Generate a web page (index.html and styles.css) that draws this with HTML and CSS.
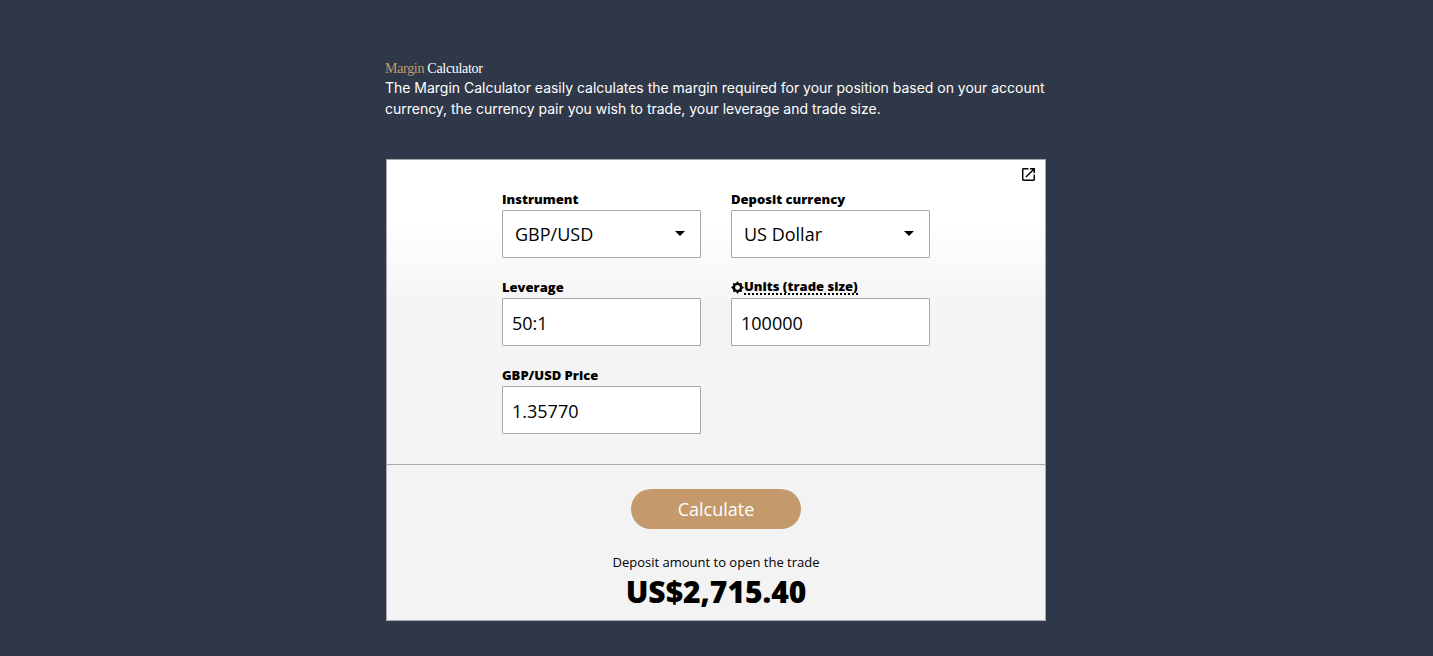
FILE: index.html
```html
<!DOCTYPE html>
<html lang="en">
<head>
<meta charset="utf-8">
<title>Margin Calculator</title>
<link rel="stylesheet" href="styles.css">
</head>
<body>
<main class="page">
  <header class="intro">
    <h1 class="title"><span class="accent">Margin</span> Calculator</h1>
    <p class="desc">The Margin Calculator easily calculates the margin required for your position based on your account currency, the currency pair you wish to trade, your leverage and trade size.</p>
  </header>
  <section class="card">
    <a class="popout" aria-label="Open in new window">
      <svg viewBox="3 3 18 18" width="13" height="13"><path d="M19 19H5V5h7V3H5a2 2 0 0 0-2 2v14a2 2 0 0 0 2 2h14a2 2 0 0 0 2-2v-7h-2v7zM14 3v2h3.59l-9.83 9.83 1.41 1.41L19 6.41V10h2V3h-7z" fill="#000"/></svg>
    </a>
    <div class="form-area">
      <div class="grid">
        <div class="field">
          <label class="label">Instrument</label>
          <div class="control select"><span>GBP/USD</span><i class="caret"></i></div>
        </div>
        <div class="field">
          <label class="label">Deposit currency</label>
          <div class="control select"><span>US Dollar</span><i class="caret"></i></div>
        </div>
        <div class="field">
          <label class="label">Leverage</label>
          <div class="control"><span>50:1</span></div>
        </div>
        <div class="field">
          <label class="label"><svg class="gear" viewBox="0 0 24 24" width="13" height="13"><path fill-rule="evenodd" d="M12 0l2.800 4.200 5-.6.400 5L24 12l-3.800 3.400-.4 5-5-.6L12 24l-2.800-4.200-5 .6-.4-5L0 12l3.800-3.400.4-5 5 .6zM12 7.500a4.500 4.500 0 1 0 0 9 4.500 4.500 0 0 0 0-9z" fill="#000"/></svg><span class="dotted">Units (trade size)</span></label>
          <div class="control"><span>100000</span></div>
        </div>
        <div class="field">
          <label class="label">GBP/USD Price</label>
          <div class="control"><span>1.35770</span></div>
        </div>
      </div>
    </div>
    <div class="result-area">
      <button class="calc" type="button">Calculate</button>
      <p class="result-label">Deposit amount to open the trade</p>
      <p class="result-value">US$2,715.40</p>
    </div>
  </section>
</main>
</body>
</html>
```
FILE: styles.css
```css
* { box-sizing: border-box; }
html, body { margin: 0; padding: 0; }
body {
  background: #2f3849;
  height: 656px;
  overflow: hidden;
  font-family: "Open Sans", sans-serif;
  color: #000;
}
.page {
  width: 661px;
  margin-left: 385px;
  padding-top: 60px;
}
.intro { height: 99px; }
.title {
  margin: 0;
  font-family: "Liberation Serif", serif;
  font-size: 14px;
  font-weight: 400;
  line-height: 17px;
  letter-spacing: -0.3px;
  color: #fff;
}
.accent { color: #c49a6c; }
.desc {
  margin: 0;
  font-family: Inter, sans-serif;
  font-size: 14px;
  line-height: 21px;
  letter-spacing: -0.015px;
  color: #fff;
}
.card {
  position: relative;
  margin-left: 1px;
  width: 660px;
  height: 462px;
  border: 1px solid #a9a9a9;
  background: #f3f3f3;
  display: flex;
  flex-direction: column;
}
.popout {
  position: absolute;
  top: 8px;
  right: 10px;
  width: 13px;
  height: 13px;
  display: block;
}
.popout svg { display: block; }
.form-area {
  height: 305px;
  padding: 28px 0 0 115px;
  background: linear-gradient(#fff 60px, #f4f4f4 150px);
  border-bottom: 1px solid #a9a9a9;
}
.grid {
  display: grid;
  grid-template-columns: 199px 199px;
  column-gap: 30px;
  row-gap: 18px;
}
.field { display: flex; flex-direction: column; }
.label {
  height: 22px;
  display: flex;
  align-items: center;
  font-size: 13px;
  font-weight: 800;
  line-height: 18px;
  white-space: nowrap;
}
.gear { flex: none; }
.dotted { border-bottom: 2px dotted #000; line-height: 14px; }
.control {
  height: 48px;
  background: #fff;
  border: 1px solid #a9a9a9;
  border-radius: 1px;
  padding: 2px 9px 0;
  display: flex;
  align-items: center;
  font-size: 18px;
  line-height: 24px;
}
.select {
  padding: 0 15px 0 12px;
  justify-content: space-between;
}
.caret {
  width: 0;
  height: 0;
  margin-bottom: 2px;
  border-left: 5px solid transparent;
  border-right: 5px solid transparent;
  border-top: 5px solid #000;
}
.result-area {
  flex: 1;
  display: flex;
  flex-direction: column;
  align-items: center;
  padding-top: 24px;
}
.calc {
  width: 170px;
  height: 40px;
  border: 0;
  border-radius: 20px;
  background: #c49a6c;
  color: #fff;
  font-family: "Open Sans", sans-serif;
  font-size: 18px;
}
.result-label {
  margin: 23px 0 0;
  font-size: 13px;
  line-height: 20px;
}
.result-value {
  margin: 2px 0 0;
  font-size: 30px;
  font-weight: 800;
  line-height: 36px;
}
```
